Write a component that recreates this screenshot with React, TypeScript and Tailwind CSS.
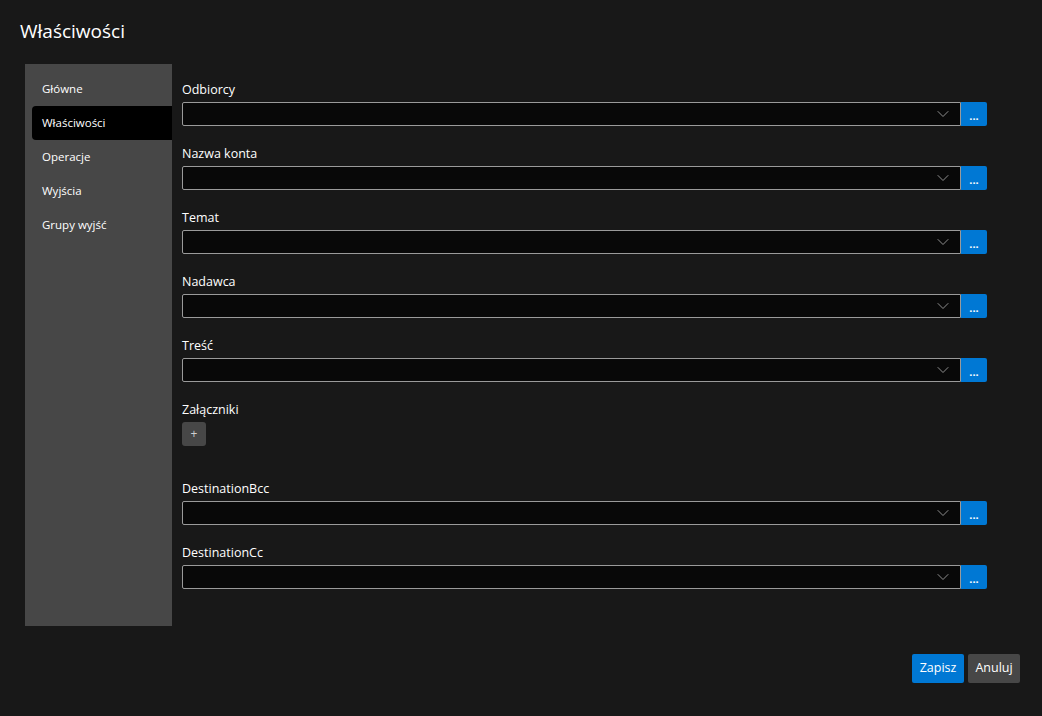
import { ChevronDown } from "lucide-react"

const nav = ["Główne", "Właściwości", "Operacje", "Wyjścia", "Grupy wyjść"]

function Field({ label }: { label: string }) {
  return (
    <div className="flex flex-col">
      <div className="h-[24px] flex items-center text-[12.5px] text-white">{label}</div>
      <div className="flex h-[24px] w-[805px]">
        <div className="flex-1 flex items-center justify-end pr-[7px] bg-[#080808] border border-[#9a9a9a] rounded-l-[2px]">
          <ChevronDown className="w-[20px] h-[20px] text-[#9a9a9a]" strokeWidth={1.1} />
        </div>
        <button className="w-[26px] h-[24px] bg-[#0078d4] rounded-r-[2px] text-white text-[11px] font-bold leading-none flex items-center justify-center pt-[2px]">
          ...
        </button>
      </div>
    </div>
  )
}

export default function App() {
  return (
    <div
      className="w-[1042px] h-[716px] bg-[#181818] text-white relative overflow-hidden"
      style={{ fontFamily: '"Open Sans", "Noto Sans", sans-serif' }}
    >
      <h1 className="absolute left-[20px] top-[17px] text-[19px] leading-[28px] font-normal">Właściwości</h1>

      <div className="absolute left-[25px] top-[64px] flex">
        {/* Sidebar */}
        <div className="w-[147px] h-[562px] bg-[#474747] pt-[8px] pl-[7px]">
          {nav.map((n) => (
            <div
              key={n}
              className={
                "h-[34px] flex items-center pl-[10px] text-[11.5px] rounded-l-[4px] " +
                (n === "Właściwości" ? "bg-black" : "")
              }
            >
              {n}
            </div>
          ))}
        </div>

        {/* Content */}
        <div className="pl-[10px] pt-[14px] flex flex-col gap-[16px]">
          <Field label="Odbiorcy" />
          <Field label="Nazwa konta" />
          <Field label="Temat" />
          <Field label="Nadawca" />
          <Field label="Treść" />
          <div className="flex flex-col h-[63px]">
            <div className="h-[24px] flex items-center text-[12.5px]">Załączniki</div>
            <button className="w-[24px] h-[24px] bg-[#474747] rounded-[3px] text-[12px] text-[#cfcfcf] flex items-center justify-center">
              +
            </button>
          </div>
          <Field label="DestinationBcc" />
          <Field label="DestinationCc" />
        </div>
      </div>

      <div className="absolute right-[22px] top-[654px] flex gap-[4px]">
        <button className="w-[52px] h-[29px] bg-[#0078d4] rounded-[2px] text-[12.5px]">Zapisz</button>
        <button className="w-[52px] h-[29px] bg-[#474747] rounded-[2px] text-[12.5px]">Anuluj</button>
      </div>
    </div>
  )
}
